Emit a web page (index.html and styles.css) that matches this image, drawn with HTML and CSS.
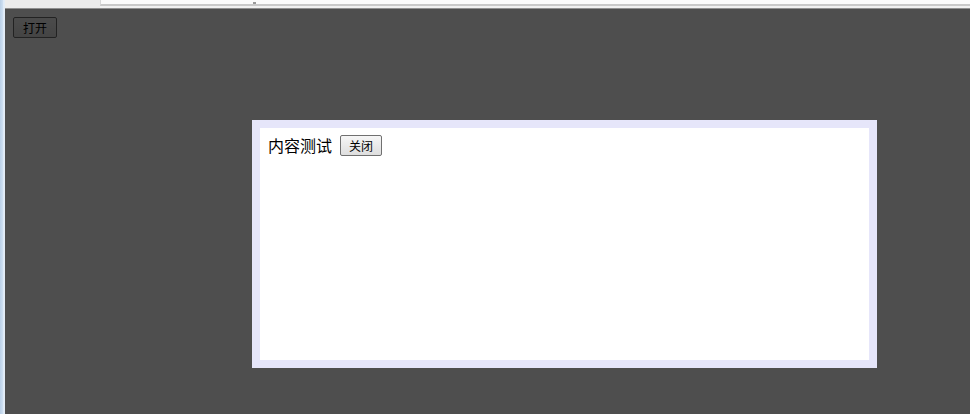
FILE: index.html
```html
<!DOCTYPE html>
<html lang="zh-CN">
<head>
<meta charset="utf-8">
<title>弹出层</title>
<link rel="stylesheet" href="styles.css">
</head>
<body>
<div class="screen">
  <div class="frame-left"></div>
  <div class="chrome">
    <div class="chrome-side"></div>
    <div class="chrome-field"><span class="chrome-mark"></span></div>
  </div>
  <div class="viewport">
    <div class="page">
      <button class="btn btn-open" type="button">打开</button>
    </div>
    <div class="overlay"></div>
    <div class="dialog">
      <div class="dialog-body">
        <span class="dialog-text">内容测试</span>
        <button class="btn btn-close" type="button">关闭</button>
      </div>
    </div>
  </div>
</div>
</body>
</html>
```

FILE: styles.css
```css
html, body {
  margin: 0;
  padding: 0;
  width: 970px;
  height: 414px;
  overflow: hidden;
  background: #ffffff;
  font-family: "Noto Sans CJK SC", "DejaVu Sans", sans-serif;
}

.screen {
  display: grid;
  grid-template-columns: 5px 1fr;
  grid-template-rows: 9px 1fr;
  width: 970px;
  height: 414px;
}

.frame-left {
  grid-row: 1 / 3;
  grid-column: 1;
  background: linear-gradient(to right, #b9cfe6 0, #cfe0f2 3px, #eef4fb 4px, #d6e4f2 5px);
}

.chrome {
  grid-row: 1;
  grid-column: 2;
  display: flex;
  background: #f0f0f0;
  border-bottom: 1px solid #8f8f8f;
  box-sizing: border-box;
}

.chrome-side {
  width: 95px;
  background: #ececec;
}

.chrome-field {
  flex: 1;
  position: relative;
  background: #fbfbfb;
  border-left: 1px solid #d8d8d8;
  border-bottom: 2px solid #c9c9c9;
  margin-bottom: 2px;
}

.chrome-mark {
  position: absolute;
  left: 152px;
  bottom: 0;
  width: 3px;
  height: 2px;
  background: #9a9a9a;
}

.viewport {
  grid-row: 2;
  grid-column: 2;
  position: relative;
  background: #ffffff;
  overflow: hidden;
}

.page {
  display: flex;
  align-items: flex-start;
  padding: 8px 8px 8px 8px;
}

.btn {
  font-family: "Noto Sans CJK SC", "DejaVu Sans", sans-serif;
  font-size: 12px;
  line-height: 14px;
  color: #000;
  background: linear-gradient(#f6f6f6, #dedede);
  border: 1px solid #707070;
  border-radius: 2px;
  padding: 2px 6px;
  margin: 0;
}

.btn-open {
  width: 44px;
  height: 21px;
  padding: 0;
}

.overlay {
  position: absolute;
  inset: 0;
  background: rgba(0, 0, 0, 0.695);
}

.dialog {
  position: absolute;
  left: 247px;
  top: 111px;
  width: 625px;
  height: 248px;
  box-sizing: border-box;
  border: 8px solid #e6e6fa;
  background: #ffffff;
}

.dialog-body {
  display: flex;
  align-items: center;
  gap: 8px;
  padding: 7px 8px;
}

.dialog-text {
  font-size: 16px;
  line-height: 20px;
  color: #000;
  margin-top: -2px;
}

.btn-close {
  width: 42px;
  height: 21px;
  padding: 0;
}
```
